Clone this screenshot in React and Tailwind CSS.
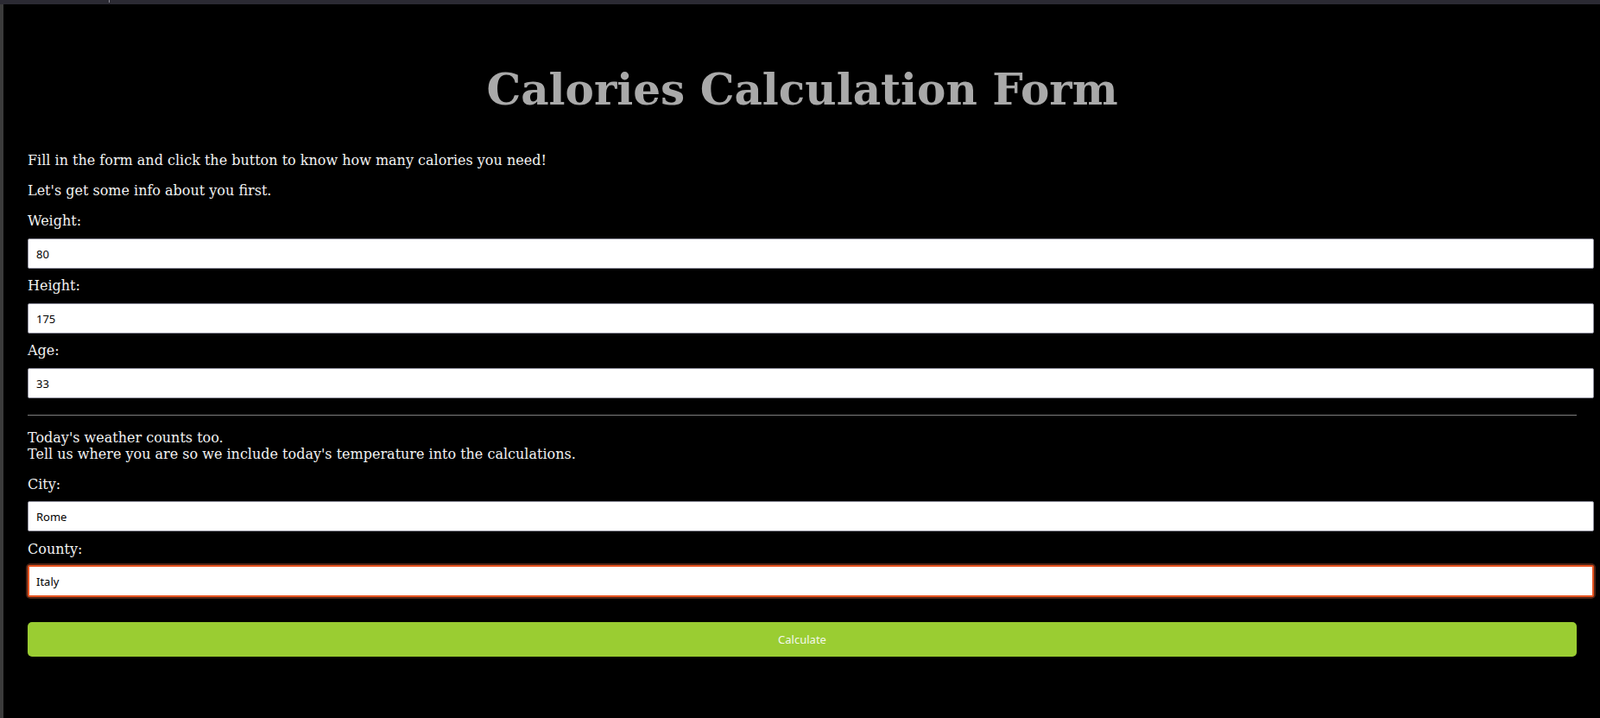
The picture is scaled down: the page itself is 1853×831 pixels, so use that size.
import { useState } from 'react'

const fields = [
  { key: 'weight', label: 'Weight:' },
  { key: 'height', label: 'Height:' },
  { key: 'age', label: 'Age:' }
]

const inputClass =
  "block h-[35px] w-[calc(100%+20px)] rounded-[2px] border border-[#8f8f9d] bg-white px-[9px] text-[13px] text-black outline-none font-['Noto_Sans',sans-serif]"

const App = () => {
  const [form, setForm] = useState({ weight: '80', height: '175', age: '33', city: 'Rome', country: 'Italy' })

  const update = (key) => (event) => setForm({ ...form, [key]: event.target.value })

  return (
    <div className="flex h-screen flex-col bg-black font-['DejaVu_Serif',serif] leading-[19px]">
      <div className="relative h-[5px] shrink-0 bg-[#2b2a33]">
        <div className="absolute left-[126px] top-0 h-[3px] w-px bg-[#8a8a95]" />
      </div>

      <div className="flex flex-1">
        <div className="w-[4px] shrink-0 bg-[#3b3b3b]" />

        <main className="flex-1 pl-[28px] pr-[27px] text-[16px] text-[#f2f2f2]">
          <h1 className="mt-[70px] text-center text-[50px] leading-[58px] font-bold text-[#a9a9a9]">
            Calories Calculation Form
          </h1>

          <p className="mt-[43px]">Fill in the form and click the button to know how many calories you need!</p>
          <p className="mt-[16px]">Let's get some info about you first.</p>

          {fields.map((field, index) => (
            <div key={field.key}>
              <label className={index === 0 ? 'mt-[16px] block' : 'mt-[10px] block'}>{field.label}</label>
              <input type="text" value={form[field.key]} onChange={update(field.key)} className={`mt-[11px] ${inputClass}`} />
            </div>
          ))}

          <hr className="mt-[19px] border-t border-[#7d7d7d]" />

          <p className="mt-[16px]">
            Today's weather counts too.
            <br />
            Tell us where you are so we include today's temperature into the calculations.
          </p>

          <label className="mt-[16px] block">City:</label>
          <input type="text" value={form.city} onChange={update('city')} className={`mt-[10px] ${inputClass}`} />

          <label className="mt-[11px] block">County:</label>
          <div className="mt-[9px] w-[calc(100%+20px)] rounded-[3px] shadow-[0_0_0_2px_#4f2416]">
            <input
              type="text"
              value={form.country}
              onChange={update('country')}
              className="block h-[37px] w-full rounded-[2px] border-2 border-[#e95420] bg-white px-[8px] text-[13px] text-black outline-none font-['Noto_Sans',sans-serif]"
            />
          </div>

          <button className="mt-[29px] flex h-[40px] w-full items-center justify-center rounded-[5px] bg-[#9acd32] text-[13px] text-[#f4f8ec] font-['Noto_Sans',sans-serif]">
            Calculate
          </button>
        </main>
      </div>
    </div>
  )
}

export default App
